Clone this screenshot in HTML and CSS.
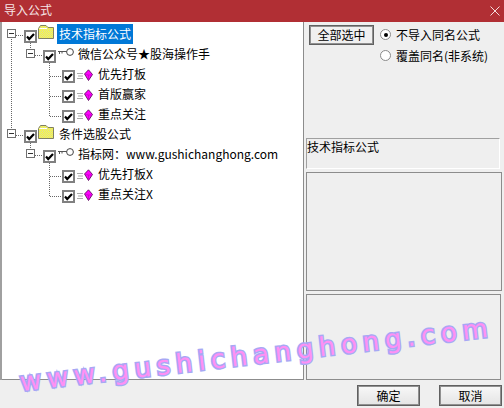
FILE: index.html
```html
<!DOCTYPE html>
<html lang="zh">
<head>
<meta charset="utf-8">
<title>导入公式</title>
<link rel="stylesheet" href="styles.css">
</head>
<body>
<svg width="0" height="0" class="defs">
  <defs>
    <pattern id="dither" width="2" height="2" patternUnits="userSpaceOnUse"><rect width="2" height="2" fill="#ffff30"/><rect width="1" height="1" fill="#d8d8a0"/><rect x="1" y="1" width="1" height="1" fill="#d8d8a0"/></pattern>
    <symbol id="cb" viewBox="0 0 13 13"><rect x="1" y="1" width="11" height="11" fill="#fff" stroke="#808080" stroke-width="2"/><path d="M3 6.5 5.2 9 10 4" fill="none" stroke="#000" stroke-width="2.2"/></symbol>
    <symbol id="folder" viewBox="0 0 16 14"><path d="M.5 13.5V3.5L2.5 .5H8L10 2.5H15.5V13.5Z" fill="url(#dither)" stroke="#808060"/><path d="M1.5 3.5H9" stroke="#fff"/></symbol>
    <symbol id="key" viewBox="0 0 16 9"><path d="M0 3.5H9M1.5 3.5V6M4 3.5V5.5" fill="none" stroke="#555" stroke-width="1"/><circle cx="12" cy="4" r="3.4" fill="#fff" stroke="#444"/></symbol>
    <symbol id="gem" viewBox="0 0 16 13"><path d="M0 4.5H6M1 7H6M0 9.5H6" stroke="#aaa"/><path d="M7.5 5 11.5 .8 15.5 5.5 11.5 11.5Z" fill="#ff00ff" stroke="#500050" stroke-width=".8"/><path d="M11.5 6 15 6M11.5 6 8 5.5M11.5 6V11" fill="none" stroke="#c000c0" stroke-width=".7"/></symbol>
  </defs>
</svg>
<header class="titlebar">
  <span class="title">导入公式</span>
  <svg class="close" width="10" height="10" viewBox="0 0 10 10"><path d="M.5 .5 9.5 9.5M9.5 .5 .5 9.5" stroke="#f4dcdc" fill="none"/></svg>
</header>
<main class="main">
  <section class="tree">
    <svg class="lines" width="62" height="200" viewBox="2 22 62 200">
      <path d="M11.5 39V130M16 35.5H24M30.5 43V50M35 55.5H43M49.5 63V116M50 76.5H62M50 96.5H62M50 116.5H62M16 135.5H24M30.5 143V150M35 155.5H43M49.5 163V196M50 176.5H62M50 196.5H62" fill="none" stroke="#666" stroke-dasharray="1 1"/>
    </svg>
    <div class="row l0"><span class="exp"></span><svg class="cb"><use href="#cb"/></svg><svg class="folder"><use href="#folder"/></svg><span class="label selected">技术指标公式</span></div>
    <div class="row l1"><span class="exp"></span><svg class="cb"><use href="#cb"/></svg><svg class="key"><use href="#key"/></svg><span class="label">微信公众号★股海操作手</span></div>
    <div class="row l2"><svg class="cb"><use href="#cb"/></svg><svg class="gem"><use href="#gem"/></svg><span class="label">优先打板</span></div>
    <div class="row l2"><svg class="cb"><use href="#cb"/></svg><svg class="gem"><use href="#gem"/></svg><span class="label">首版赢家</span></div>
    <div class="row l2"><svg class="cb"><use href="#cb"/></svg><svg class="gem"><use href="#gem"/></svg><span class="label">重点关注</span></div>
    <div class="row l0"><span class="exp"></span><svg class="cb"><use href="#cb"/></svg><svg class="folder"><use href="#folder"/></svg><span class="label">条件选股公式</span></div>
    <div class="row l1"><span class="exp"></span><svg class="cb"><use href="#cb"/></svg><svg class="key"><use href="#key"/></svg><span class="label">指标网：www.gushichanghong.com</span></div>
    <div class="row l2"><svg class="cb"><use href="#cb"/></svg><svg class="gem"><use href="#gem"/></svg><span class="label">优先打板X</span></div>
    <div class="row l2"><svg class="cb"><use href="#cb"/></svg><svg class="gem"><use href="#gem"/></svg><span class="label">重点关注X</span></div>
  </section>
  <aside class="side">
    <div class="controls">
      <button class="btn select-all">全部选中</button>
      <div class="radios">
        <label class="radio"><span class="dot on"></span>不导入同名公式</label>
        <label class="radio"><span class="dot"></span>覆盖同名(非系统)</label>
      </div>
    </div>
    <div class="box caption">技术指标公式</div>
    <div class="box preview"></div>
    <div class="box notes"></div>
  </aside>
</main>
<footer class="footer">
  <button class="btn action">确定</button>
  <button class="btn action">取消</button>
</footer>
<div class="watermark">www.gushichanghong.com</div>
</body>
</html>
```
FILE: styles.css
```css
* { box-sizing: border-box; }
html, body { margin: 0; padding: 0; }
body {
  position: relative;
  width: 504px;
  height: 408px;
  overflow: hidden;
  background: #efefef;
  display: flex;
  flex-direction: column;
  font: 12px/16px "Noto Sans CJK SC", "Liberation Sans", sans-serif;
  color: #000;
}
.defs { position: absolute; }
.titlebar {
  height: 22px;
  flex: none;
  background: #b12f34;
  color: #f6e6e6;
  display: flex;
  align-items: center;
  justify-content: space-between;
  padding: 0 4px 2px 4px;
}
.close { margin-top: 2px; }
.main {
  height: 358px;
  flex: none;
  display: flex;
  border-left: 2px solid #a0a0a0;
}
.tree {
  position: relative;
  width: 302px;
  flex: none;
  background: #fff;
  padding-top: 2px;
  border-right: 1px solid #8c8c8c;
  border-bottom: 1px solid #8c8c8c;
}
.lines { position: absolute; left: 0; top: 0; }
.row { height: 20px; display: flex; align-items: flex-end; }
.l0 { padding-left: 5px; }
.l1 { padding-left: 24px; }
.l2 { padding-left: 60px; }
.exp {
  position: relative;
  width: 9px;
  height: 9px;
  margin: 0 8px 6px 0;
  border: 1px solid #707070;
  background: #fff;
}
.exp::after {
  content: "";
  position: absolute;
  left: 1px;
  top: 3px;
  width: 5px;
  height: 1px;
  background: #333;
}
.cb { width: 13px; height: 13px; margin-bottom: 1px; position: relative; }
.folder { width: 16px; height: 14px; margin: 0 3px 5px 1px; }
.key { width: 16px; height: 9px; margin: 0 4px 7px 2px; }
.gem { width: 16px; height: 13px; margin: 0 5px 2px 2px; }
.label { align-self: center; padding: 0 2px; margin-left: -2px; white-space: nowrap; }
.selected { background: #0078d7; color: #fff; height: 20px; line-height: 20px; margin-left: 0; }
.l0 .label:not(.selected) { margin-left: 0; }
.side {
  flex: 1;
  padding: 3px 2px 0 2px;
  display: flex;
  flex-direction: column;
}
.controls {
  height: 113px;
  flex: none;
  display: flex;
  gap: 6px;
  padding-left: 3px;
}
.btn {
  font: inherit;
  color: #000;
  background: linear-gradient(#f8f8f8, #e4e4e4);
  border: 1px solid #606060;
  outline: 1px solid #909090;
  outline-offset: -2px;
  padding: 0;
}
.select-all { width: 65px; height: 20px; background: #f0f0f0; }
.radios { display: flex; flex-direction: column; gap: 4px; margin-top: 1px; }
.radio { display: flex; align-items: center; height: 17px; gap: 5px; }
.dot {
  width: 11px;
  height: 11px;
  border-radius: 50%;
  border: 1px solid #8a8a8a;
  background: #fff;
  display: flex;
  align-items: center;
  justify-content: center;
}
.dot.on::after {
  content: "";
  width: 4px;
  height: 4px;
  border-radius: 50%;
  background: #000;
}
.box { border: 1px solid #a0a0a0; background: #efefef; flex: none; }
.caption { width: 194px; height: 31px; border-right-color: #fff; border-bottom-color: #fff; margin-bottom: 3px; padding-left: 0; }
.preview { width: 196px; height: 119px; border-color: #8c8c8c; margin-bottom: 3px; }
.notes { width: 195px; height: 86px; border-color: #8c8c8c; }
.footer {
  flex: 1;
  display: flex;
  justify-content: flex-end;
  gap: 19px;
  padding: 5px 2px 2px 0;
}
.action { width: 63px; height: 21px; }
.watermark {
  position: absolute;
  left: 20px;
  top: 365px;
  transform: rotate(-6.6deg);
  transform-origin: left center;
  font: 26px/34px "DejaVu Sans", sans-serif;
  letter-spacing: 5.8px;
  white-space: nowrap;
  color: #ff90f4;
  -webkit-text-stroke: 3px #a8a8f4;
  paint-order: stroke fill;
  pointer-events: none;
}
```
